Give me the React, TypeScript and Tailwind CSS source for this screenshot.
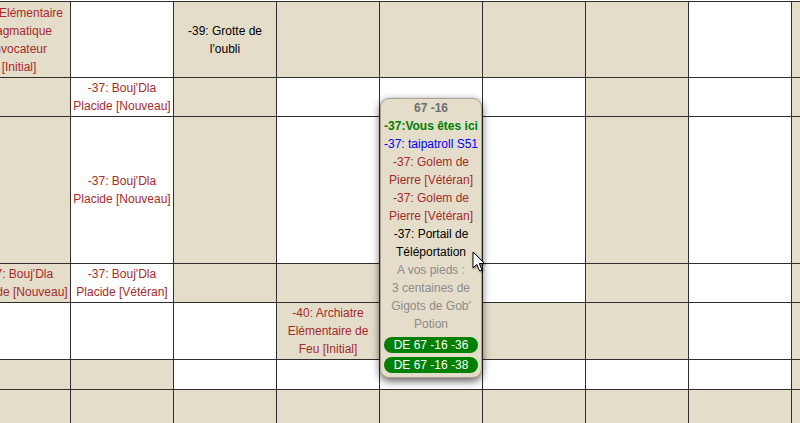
import React from 'react';

type Tone = 'red' | 'black';
type Cell = { bg: 'b' | 'w'; lines?: string[]; tone?: Tone };

const bgClass = { b: 'bg-[#e4ddca]', w: 'bg-white' };
const toneClass = { red: 'text-[#a52a2a]', black: 'text-black' };

const b = (lines?: string[], tone: Tone = 'red'): Cell => ({ bg: 'b', lines, tone });
const w = (lines?: string[], tone: Tone = 'red'): Cell => ({ bg: 'w', lines, tone });

const boujNouveau = ["-37: Bouj'Dla", 'Placide [Nouveau]'];

const rows: Cell[][] = [
  [
    b(['-40: Elémentaire', 'Magmatique', 'Invocateur', '[Initial]']),
    w(),
    b(['-39: Grotte de', "l'oubli"], 'black'),
    b(), b(), b(), b(), w(), b(),
  ],
  [b(), w(boujNouveau), b(), w(), w(), w(), b(), w(), b()],
  [b(), w(boujNouveau), b(), w(), w(), w(), b(), w(), b()],
  [b(boujNouveau), w(["-37: Bouj'Dla", 'Placide [Vétéran]']), b(), b(), b(), w(), b(), w(), b()],
  [w(), w(), w(), b(['-40: Archiatre', 'Elémentaire de', 'Feu [Initial]']), b(), b(), b(), w(), b()],
  [b(), b(), w(), w(), w(), w(), w(), w(), b()],
  [b(), b(), b(), b(), b(), b(), b(), b(), b()],
];

function Tooltip() {
  return (
    <div className="absolute left-[380px] top-[98px] z-10 h-[280px] w-[102px] rounded-[9px] border border-[#a9a294] bg-[#e4ddca] pb-1 text-center shadow-[0_3px_8px_rgba(0,0,0,0.65)]">
      <div className="font-bold text-[#707070]">67 -16</div>
      <div className="font-bold text-[#008000]">-37:Vous êtes ici</div>
      <div className="text-[#0000ff]">-37: taipatroll S51</div>
      <div className="text-[#a52a2a]">-37: Golem de<br />Pierre [Vétéran]</div>
      <div className="text-[#a52a2a]">-37: Golem de<br />Pierre [Vétéran]</div>
      <div className="text-black">-37: Portail de<br />Téléportation</div>
      <div className="text-[#8c8c8c]">A vos pieds :</div>
      <div className="text-[#8c8c8c]">3 centaines de<br />Gigots de Gob'</div>
      <div className="text-[#8c8c8c]">Potion</div>
      <div className="mt-1 flex flex-col items-center gap-1">
        <span className="h-4 w-[94px] rounded-full bg-[#008000] leading-4 text-white">DE 67 -16 -36</span>
        <span className="h-4 w-[94px] rounded-full bg-[#008000] leading-4 text-white">DE 67 -16 -38</span>
      </div>
    </div>
  );
}

function Cursor() {
  return (
    <svg
      className="absolute left-[472px] top-[251px] z-20 drop-shadow-[1px_1px_1px_rgba(0,0,0,0.45)]"
      width="14"
      height="22"
      viewBox="0 0 14 22"
    >
      <path
        d="M1 1 L1 17 L4.8 13.4 L7.6 20 L10 19 L7.3 12.5 L12.4 12.5 Z"
        fill="#fff"
        stroke="#000"
        strokeWidth="1"
        strokeLinejoin="round"
      />
    </svg>
  );
}

export default function App() {
  return (
    <div className="relative h-[423px] w-[800px] overflow-hidden bg-white font-['Liberation_Sans',Arial,sans-serif] text-[12px] leading-[18px]">
      <div className="ml-[-33px] mt-px grid w-max grid-cols-[repeat(9,102px)] grid-rows-[75px_38px_146px_38px_56px_29px_60px] gap-px bg-[#2e2e2e] p-px">
        {rows.flatMap((row, r) =>
          row.map((cell, c) => (
            <div
              key={`${r}-${c}`}
              className={`flex flex-col items-center justify-center text-center ${bgClass[cell.bg]} ${
                toneClass[cell.tone ?? 'red']
              }`}
            >
              {cell.lines?.map((line) => (
                <span key={line} className="whitespace-nowrap">
                  {line}
                </span>
              ))}
            </div>
          )),
        )}
      </div>
      <Tooltip />
      <Cursor />
    </div>
  );
}
